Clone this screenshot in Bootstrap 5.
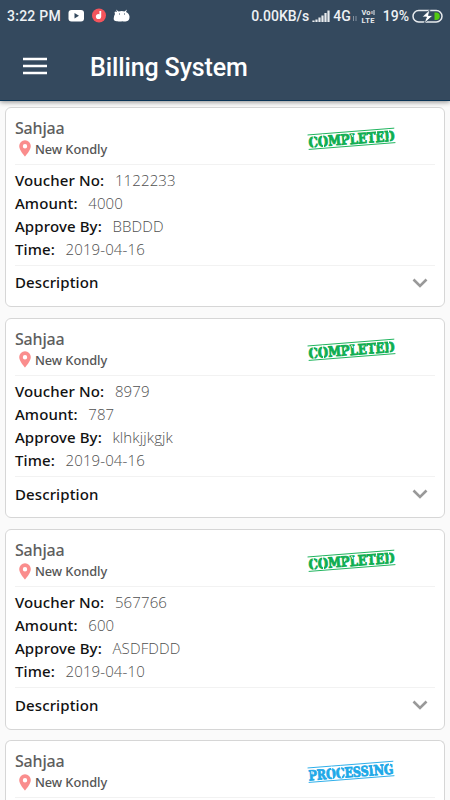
<!DOCTYPE html>
<html lang="en">
<head>
<meta charset="utf-8">
<meta name="viewport" content="width=device-width, initial-scale=1">
<title>Billing System</title>
<link href="https://cdn.jsdelivr.net/npm/bootstrap@5.3.0/dist/css/bootstrap.min.css" rel="stylesheet">
<style>
body{background:#fafafa;font-family:"Noto Sans","Open Sans",sans-serif;height:800px;overflow:hidden}
.topbar{background:#34495e;height:101px;border-bottom:1px solid #0b3456;box-shadow:0 1px 5px rgba(0,0,0,.45);color:#fff;font-family:Roboto,sans-serif}
.status{height:32px;padding:0 7px 0 7px;font-size:14px;font-weight:500;color:#eef1f4;line-height:32px}
.clock{letter-spacing:.25px}
.bar{height:68px;padding-left:23px}
.app-title{font-size:25px;font-weight:500;margin-left:43px;line-height:30px;letter-spacing:-.12px;padding-top:4px}
.vouchers{height:699px;padding:5.5px 5.3px 0 5.3px;gap:10.6px}
.voucher{height:200.7px;border:1.3px solid #d6d6d6;border-radius:6px;background:#fff;padding:0 8.6px}
.voucher:last-child{height:60px;border-bottom:0;border-radius:6px 6px 0 0}
.head{height:57px;border-bottom:1px solid #f2f2f2;padding-top:9px}
.who{font-size:16px;line-height:22px;font-weight:500;color:#5e5e5e;letter-spacing:-.15px}
.place{font-size:12.800px;line-height:20px;font-weight:500;color:#555;padding-left:3px;letter-spacing:-.05px}
.stamp{margin:9px 38px 0 0}
.rows{height:101px;border-bottom:1px solid #f2f2f2;padding-top:4px;font-size:15px;line-height:23.1px;color:#505050}
.rows b,.desc{font-weight:500;color:#111;letter-spacing:.13px}
.rows span{font-weight:300;font-family:"Open Sans",sans-serif;margin-left:10.6px;letter-spacing:.12px}
.desc{height:34px;font-size:15px;padding-right:7px}
</style>
<script src="https://cdn.jsdelivr.net/npm/bootstrap@5.3.0/dist/js/bootstrap.bundle.min.js"></script>
</head>
<body>
<svg width="0" height="0" class="position-absolute">
<defs>
<symbol id="pin" viewBox="0 0 12 17"><path fill="#fa8d8d" fill-rule="evenodd" d="M6 .3a5.8 5.8 0 0 0-5.8 5.8C.2 10.3 6 16.700 6 16.700s5.800-6.400 5.800-10.600A5.800 5.800 0 0 0 6 .3zM6 4a2.200 2.200 0 1 1 0 4.400A2.200 2.200 0 0 1 6 4z"/></symbol>
<symbol id="chev" viewBox="0 0 16 10"><path d="M1.500 1.500 8 8l6.500-6.500" fill="none" stroke="#999" stroke-width="2.600"/></symbol>
<symbol id="completed" viewBox="0 0 90 26">
<g transform="rotate(-4.500 45 13)" fill="#0fae52" stroke="#0fae52"><path d="M1 5.500h87M1 20h87" fill="none" stroke-width=".9"/><text x="1.500" y="18" font-family="DejaVu Serif,serif" font-weight="700" font-size="14" stroke-width=".9" textLength="86" lengthAdjust="spacingAndGlyphs">COMPLETED</text><path d="M6.500 6v3M6.500 15v4M16 6v4M16 15v4M37.500 10v3M45 8l1 3M60.500 11h3M70 7v3M82 6v3M82 15v4" stroke="#fff" stroke-width="1"/></g></symbol>
<symbol id="processing" viewBox="0 0 90 26">
<g transform="rotate(-4.500 45 13)" fill="#1fa9e8" stroke="#1fa9e8"><path d="M1 5.500h86M1 20h86" fill="none" stroke-width=".9"/><text x="1.500" y="18" font-family="DejaVu Serif,serif" font-weight="700" font-size="13.700" stroke-width=".9" textLength="85" lengthAdjust="spacingAndGlyphs">PROCESSING</text><path d="M5 9v3M25 6v3M25 15v3M34 6v3M34 15v3M66 8v3M83 6v3" stroke="#fff" stroke-width="1"/></g></symbol>
</defs>
</svg>
<header class="topbar position-relative">
<div class="status d-flex align-items-center">
<span class="clock">3:22 PM</span>
<svg width="62" height="16" viewBox="0 0 62 16" style="margin-left:7px"><rect x=".5" y="2" width="15.500" height="11.500" rx="3" fill="#fff"/><path d="M6.500 5v5.500l4.500-2.700z" fill="#34495e"/><circle cx="31" cy="7.500" r="7" fill="#f4545c"/><circle cx="30.500" cy="8.500" r="2.600" fill="#fff"/><path d="M32.300 8.500V3" stroke="#fff" stroke-width="1.800"/><path d="M47 6q-1-1.500 0-2.500l2 .5L48 1.500l2.500 2q3.500-1 6 0L59 1.500l-1 2.500q3 1 3.500 4.500.300 4-3 4.700-2 .5-4 0-3 .8-5 0-4 .3-3.800-2.700.200-3 1.300-4.500z" fill="#fff"/><path d="M51 6h1M56 6h1" stroke="#34495e" stroke-width="1"/></svg>
<span class="ms-auto">0.00KB/s</span>
<svg width="18" height="13" viewBox="0 0 18 13" style="margin-left:3px"><path d="M1.500 12v-1.500M4.500 12V9.500M7.500 12V7.500M10.500 12V5.500M13.500 12V3M16.500 12V.5" stroke="#e8ebee" stroke-width="2.200"/></svg>
<span style="margin-left:3px">4G</span>
<svg width="24" height="16" viewBox="0 0 24 16" style="margin-left:1px" font-family="Roboto" font-weight="700" fill="#e8ebee"><path d="M1.500 8v5M4 8v5" stroke="#8491a0" stroke-width="1"/><text x="9.500" y="6.800" font-size="7.500" textLength="9">Vo</text><path d="M20 3v3M22 2v5" stroke="#e8ebee"/><text x="9.500" y="14.500" font-size="7.500" textLength="13">LTE</text></svg>
<span style="margin-left:7px">19%</span>
<svg width="31" height="15" viewBox="0 0 31 15" style="margin-left:3px"><rect x="1" y="1.500" width="29" height="11.500" rx="5.700" fill="none" stroke="#e8ebee" stroke-width="1.500"/><path d="M22.500 3.500V11H24a3.700 3.700 0 0 0 0-7.500z" fill="#54cb12"/><path d="M18 .5 10 8h4.500L12 14.500 21 6.500h-4.500z" fill="#fff" stroke="#34495e" stroke-width=".8"/></svg>
</div>
<div class="bar d-flex align-items-center">
<svg width="24" height="18" viewBox="0 0 24 18"><path d="M0 2h24M0 9h24M0 16h24" stroke="#fff" stroke-width="2.400"/></svg>
<div class="app-title">Billing System</div>
</div>
</header>
<main class="vouchers d-flex flex-column overflow-hidden" id="list"></main>
<script>
const vouchers=[{rows:["1122233","4000","BBDDD","2019-04-16"],state:"completed"},{rows:["8979","787","klhkjjkgjk","2019-04-16"],state:"completed"},{rows:["567766","600","ASDFDDD","2019-04-10"],state:"completed"},{state:"processing"}];
const labels=["Voucher No:","Amount:","Approve By:","Time:"];
document.getElementById("list").innerHTML=vouchers.map(v=>`<article class="voucher flex-shrink-0">
<div class="head d-flex justify-content-between"><div><div class="who">Sahjaa</div><div class="place d-flex align-items-center"><svg width="14" height="17" style="margin-right:3px"><use href="#pin"/></svg>New Kondly</div></div>
<svg class="stamp" width="90" height="26"><use href="#${v.state}"/></svg></div>
${v.rows?`<div class="rows">${labels.map((l,i)=>`<div><b>${l}</b><span>${v.rows[i]}</span></div>`).join("")}</div>
<div class="desc d-flex align-items-center justify-content-between">Description<svg width="16" height="10"><use href="#chev"/></svg></div>`:""}
</article>`).join("");
</script>
</body>
</html>
